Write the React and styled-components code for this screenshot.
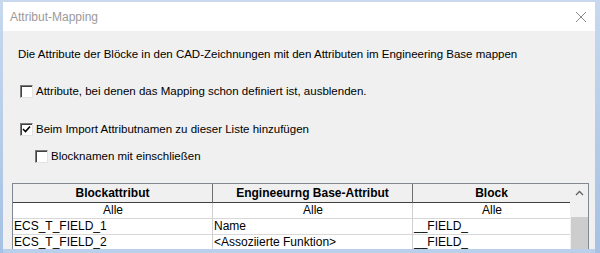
import React from "react";
import styled, { createGlobalStyle } from "styled-components";

const Global = createGlobalStyle`
  html, body { margin: 0; padding: 0; }
  body { font-family: "Liberation Sans", Arial, sans-serif; }
`;

const Frame = styled.div`
  width: 600px;
  height: 253px;
  box-sizing: border-box;
  padding: 2px 5px 0 3px;
  background: linear-gradient(180deg, #c8d9ee, #a6c1e4);
  overflow: hidden;
`;

const Window = styled.div`
  height: 247px;
  display: flex;
  flex-direction: column;
  background: #f0f0f0;
  overflow: hidden;
  border-bottom: 4px solid #b9cfeb;
`;

const TitleBar = styled.div`
  flex: none;
  height: 29px;
  background: #fff;
  display: flex;
  align-items: center;
  justify-content: space-between;
  padding: 0 8px 0 7px;
  font-size: 12px;
  color: #9a9a9a;
`;

const Close = styled.svg`
  width: 12px;
  height: 12px;
`;

const Body = styled.div`
  flex: 1;
  padding: 15px 0 0 9px;
  display: flex;
  flex-direction: column;
  font-size: 11.5px;
  color: #000;
`;

const Description = styled.div`
  line-height: 16px;
  padding-left: 6px;
`;

const CheckRow = styled.label`
  display: flex;
  align-items: center;
  gap: 3px;
  height: 16px;
  line-height: 16px;
  margin-top: ${(p) => p.$gap}px;
  margin-left: ${(p) => p.$indent}px;
`;

const Box = styled.span`
  width: 13px;
  height: 13px;
  box-sizing: border-box;
  background: #fff;
  border-top: 1px solid #7a7a7a;
  border-left: 1px solid #7a7a7a;
  border-right: 1px solid #e3e3e3;
  border-bottom: 1px solid #e3e3e3;
  box-shadow: inset 1px 1px 0 #404040;
  display: flex;
  align-items: center;
  justify-content: center;
`;

const TableFrame = styled.div`
  margin-top: 19px;
  width: 577px;
  box-sizing: border-box;
  border: 1px solid #828790;
  border-bottom: none;
  display: flex;
  background: #fff;
  flex: 1;
  overflow: hidden;
  font-size: 12px;
`;

const Grid = styled.div`
  flex: 1;
  display: grid;
  grid-template-columns: 200px 200px 1fr;
  grid-auto-rows: min-content;
  align-content: start;
`;

const HeadCell = styled.div`
  height: 18px;
  line-height: 18px;
  background: #f0f0f0;
  font-weight: bold;
  text-align: center;
  border-bottom: 1px solid #404040;
  border-right: ${(p) => (p.$last ? "none" : "1px solid #6e6e6e")};
`;

const Cell = styled.div`
  height: 15px;
  line-height: 15px;
  padding-left: 1px;
  text-align: ${(p) => (p.$center ? "center" : "left")};
  border-bottom: 1px solid #d8d8d8;
  border-right: ${(p) => (p.$last ? "none" : "1px solid #d0d0d0")};
  white-space: nowrap;
  overflow: hidden;
`;

const Scrollbar = styled.div`
  width: 18px;
  flex: none;
  background: #f0f0f0;
  display: flex;
  flex-direction: column;
  align-items: center;
`;

const Arrow = styled.svg`
  width: 9px;
  height: 6px;
  margin: 6px 0 0;
`;

const Thumb = styled.div`
  width: 17px;
  margin-top: 21px;
  flex: 1;
  background: #cdcdcd;
`;

const rows = [
  ["ECS_T_FIELD_1", "Name", "__FIELD_"],
  ["ECS_T_FIELD_2", "<Assoziierte Funktion>", "__FIELD_"],
];

function Check({ checked }) {
  return (
    <Box>
      {checked && (
        <svg width="9" height="9" viewBox="0 0 9 9">
          <path d="M1 4 L3.5 6.5 L8 1.5" fill="none" stroke="#000" strokeWidth="1.6" />
        </svg>
      )}
    </Box>
  );
}

export default function App() {
  return (
    <Frame>
      <Global />
      <Window>
        <TitleBar>
          <span>Attribut-Mapping</span>
          <Close viewBox="0 0 12 12">
            <path d="M1 1 L11 11 M11 1 L1 11" stroke="#8a8a8a" strokeWidth="1" fill="none" />
          </Close>
        </TitleBar>
        <Body>
          <Description>
            Die Attribute der Blöcke in den CAD-Zeichnungen mit den Attributen im Engineering Base mappen
          </Description>
          <CheckRow $gap={21} $indent={8}>
            <Check />
            Attribute, bei denen das Mapping schon definiert ist, ausblenden.
          </CheckRow>
          <CheckRow $gap={22} $indent={8}>
            <Check checked />
            Beim Import Attributnamen zu dieser Liste hinzufügen
          </CheckRow>
          <CheckRow $gap={11} $indent={23}>
            <Check />
            Blocknamen mit einschließen
          </CheckRow>
          <TableFrame>
            <Grid>
              <HeadCell>Blockattribut</HeadCell>
              <HeadCell>Engineeurng Base-Attribut</HeadCell>
              <HeadCell $last>Block</HeadCell>
              <Cell $center>Alle</Cell>
              <Cell $center>Alle</Cell>
              <Cell $center $last>Alle</Cell>
              {rows.map((r) =>
                r.map((c, i) => (
                  <Cell key={r[0] + i} $last={i === 2}>
                    {c}
                  </Cell>
                ))
              )}
            </Grid>
            <Scrollbar>
              <Arrow viewBox="0 0 9 6">
                <path d="M1 5 L4.5 1.5 L8 5" fill="none" stroke="#606060" strokeWidth="1.3" />
              </Arrow>
              <Thumb />
            </Scrollbar>
          </TableFrame>
        </Body>
      </Window>
    </Frame>
  );
}
